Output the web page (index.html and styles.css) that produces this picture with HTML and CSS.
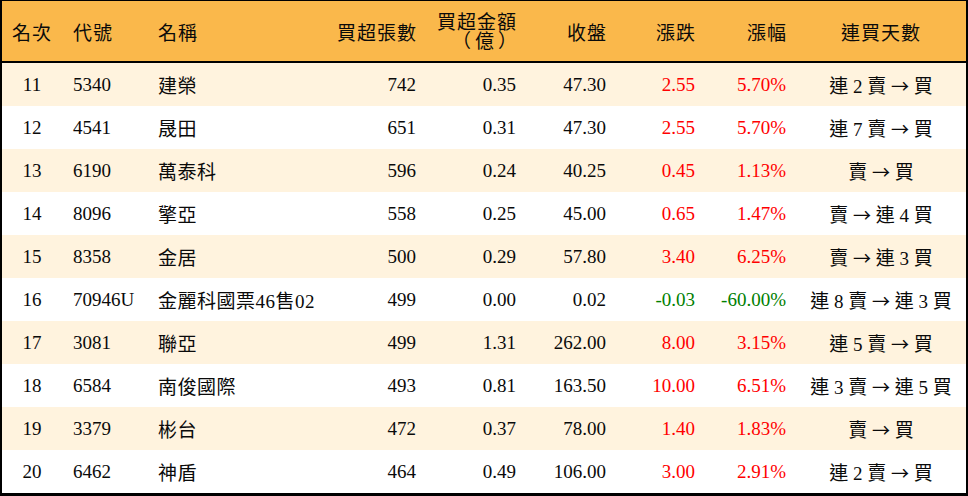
FILE: index.html
```html
<!DOCTYPE html>
<html lang="zh-Hant">
<head>
<meta charset="utf-8">
<title>買超排行</title>
<link rel="stylesheet" href="styles.css">
</head>
<body>
<div class="board">
  <div class="row head">
    <div class="c rank">名次</div>
    <div class="c code">代號</div>
    <div class="c name">名稱</div>
    <div class="c num">買超張數</div>
    <div class="c num two"><span class="line">買超金額</span><span class="line unit">（億）</span></div>
    <div class="c num">收盤</div>
    <div class="c num">漲跌</div>
    <div class="c num">漲幅</div>
    <div class="c days">連買天數</div>
  </div>
  <div class="row odd">
    <div class="c rank">11</div><div class="c code">5340</div><div class="c name">建榮</div>
    <div class="c num">742</div><div class="c num">0.35</div><div class="c num">47.30</div>
    <div class="c num up">2.55</div><div class="c num up">5.70%</div><div class="c days">連 2 賣 <span class="arr">→</span> 買</div>
  </div>
  <div class="row">
    <div class="c rank">12</div><div class="c code">4541</div><div class="c name">晟田</div>
    <div class="c num">651</div><div class="c num">0.31</div><div class="c num">47.30</div>
    <div class="c num up">2.55</div><div class="c num up">5.70%</div><div class="c days">連 7 賣 <span class="arr">→</span> 買</div>
  </div>
  <div class="row odd">
    <div class="c rank">13</div><div class="c code">6190</div><div class="c name">萬泰科</div>
    <div class="c num">596</div><div class="c num">0.24</div><div class="c num">40.25</div>
    <div class="c num up">0.45</div><div class="c num up">1.13%</div><div class="c days">賣 <span class="arr">→</span> 買</div>
  </div>
  <div class="row">
    <div class="c rank">14</div><div class="c code">8096</div><div class="c name">擎亞</div>
    <div class="c num">558</div><div class="c num">0.25</div><div class="c num">45.00</div>
    <div class="c num up">0.65</div><div class="c num up">1.47%</div><div class="c days">賣 <span class="arr">→</span> 連 4 買</div>
  </div>
  <div class="row odd">
    <div class="c rank">15</div><div class="c code">8358</div><div class="c name">金居</div>
    <div class="c num">500</div><div class="c num">0.29</div><div class="c num">57.80</div>
    <div class="c num up">3.40</div><div class="c num up">6.25%</div><div class="c days">賣 <span class="arr">→</span> 連 3 買</div>
  </div>
  <div class="row">
    <div class="c rank">16</div><div class="c code">70946U</div><div class="c name">金麗科國票46售02</div>
    <div class="c num">499</div><div class="c num">0.00</div><div class="c num">0.02</div>
    <div class="c num down">-0.03</div><div class="c num down">-60.00%</div><div class="c days">連 8 賣 <span class="arr">→</span> 連 3 買</div>
  </div>
  <div class="row odd">
    <div class="c rank">17</div><div class="c code">3081</div><div class="c name">聯亞</div>
    <div class="c num">499</div><div class="c num">1.31</div><div class="c num">262.00</div>
    <div class="c num up">8.00</div><div class="c num up">3.15%</div><div class="c days">連 5 賣 <span class="arr">→</span> 買</div>
  </div>
  <div class="row">
    <div class="c rank">18</div><div class="c code">6584</div><div class="c name">南俊國際</div>
    <div class="c num">493</div><div class="c num">0.81</div><div class="c num">163.50</div>
    <div class="c num up">10.00</div><div class="c num up">6.51%</div><div class="c days">連 3 賣 <span class="arr">→</span> 連 5 買</div>
  </div>
  <div class="row odd">
    <div class="c rank">19</div><div class="c code">3379</div><div class="c name">彬台</div>
    <div class="c num">472</div><div class="c num">0.37</div><div class="c num">78.00</div>
    <div class="c num up">1.40</div><div class="c num up">1.83%</div><div class="c days">賣 <span class="arr">→</span> 買</div>
  </div>
  <div class="row">
    <div class="c rank">20</div><div class="c code">6462</div><div class="c name">神盾</div>
    <div class="c num">464</div><div class="c num">0.49</div><div class="c num">106.00</div>
    <div class="c num up">3.00</div><div class="c num up">2.91%</div><div class="c days">連 2 賣 <span class="arr">→</span> 買</div>
  </div>
</div>
</body>
</html>
```

FILE: styles.css
```css
html, body {
  margin: 0;
  padding: 0;
  background: #ffffff;
}

.board {
  width: 968px;
  height: 496px;
  box-sizing: border-box;
  border-top: 1px solid #000;
  border-left: 2px solid #000;
  border-right: 2px solid #000;
  border-bottom: 3px solid #000;
  font-family: "Liberation Serif", "Noto Sans CJK TC", serif;
  font-size: 19px;
  color: #0a0a0a;
}

.row {
  display: grid;
  grid-template-columns: 60px 85px 179px 100px 100px 90px 89px 91px 170px;
  height: 43px;
  align-items: center;
  background: #ffffff;
}

.row.odd {
  background: #fff3de;
}

.row.head {
  border-bottom: 2px solid #000;
  background: #fab84b;
  padding-top: 1px;
  box-sizing: content-box;
  height: 59px;
}

.c {
  white-space: nowrap;
}

.rank {
  text-align: center;
}

.code {
  padding-left: 11px;
}

.name {
  padding-left: 11px;
  letter-spacing: 0.5px;
}

.num {
  text-align: right;
  padding-right: 10px;
}

.days {
  text-align: center;
}

.arr {
  font-family: "Noto Sans CJK TC", sans-serif;
  font-size: 18px;
}

.head .c {
  letter-spacing: 1px;
}

.head .num {
  padding-right: 9px;
}

.two {
  display: flex;
  flex-direction: column;
  align-items: flex-end;
}

.line {
  display: block;
  line-height: 19px;
}

.head .unit {
  letter-spacing: 4px;
  margin-right: -4px;
}

.up {
  color: #ff0000;
}

.down {
  color: #008000;
}
```
